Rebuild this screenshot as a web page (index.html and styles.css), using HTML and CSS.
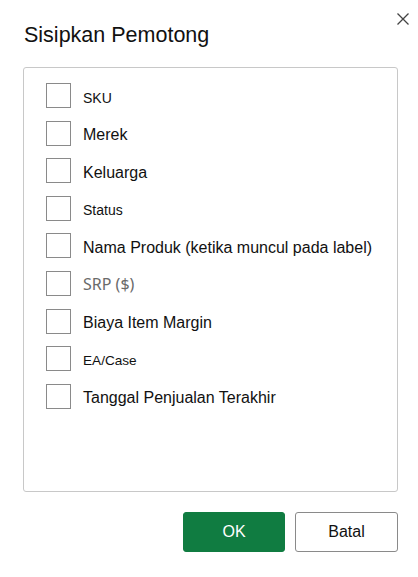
FILE: index.html
```html
<!DOCTYPE html>
<html lang="id">
<head>
<meta charset="utf-8">
<title>Sisipkan Pemotong</title>
<link rel="stylesheet" href="styles.css">
</head>
<body>
<div class="dialog">
  <div class="header">
    <h1 class="title">Sisipkan Pemotong</h1>
    <button class="close" aria-label="Tutup">
      <svg width="12" height="12" viewBox="0 0 12 12"><path d="M0.5 0.5 L11.5 11.5 M11.5 0.5 L0.5 11.5" stroke="#444" stroke-width="1.3" fill="none"/></svg>
    </button>
  </div>
  <div class="listbox">
    <label class="row"><span class="check"></span><span class="lbl sm">SKU</span></label>
    <label class="row"><span class="check"></span><span class="lbl">Merek</span></label>
    <label class="row"><span class="check"></span><span class="lbl">Keluarga</span></label>
    <label class="row"><span class="check"></span><span class="lbl sm">Status</span></label>
    <label class="row"><span class="check"></span><span class="lbl">Nama Produk (ketika muncul pada label)</span></label>
    <label class="row"><span class="check"></span><span class="lbl alt">SRP ($)</span></label>
    <label class="row"><span class="check"></span><span class="lbl">Biaya Item Margin</span></label>
    <label class="row"><span class="check"></span><span class="lbl xs">EA/Case</span></label>
    <label class="row"><span class="check"></span><span class="lbl">Tanggal Penjualan Terakhir</span></label>
  </div>
  <div class="actions">
    <button class="btn primary">OK</button>
    <button class="btn secondary">Batal</button>
  </div>
</div>
</body>
</html>
```

FILE: styles.css
```css
html, body {
  margin: 0;
  padding: 0;
  background: #ffffff;
}
body {
  font-family: "Liberation Sans", Arial, sans-serif;
  color: #1b1b1b;
}
.dialog {
  width: 418px;
  height: 577px;
  box-sizing: border-box;
  padding: 0 20px 0 23px;
  display: flex;
  flex-direction: column;
}
.header {
  display: flex;
  justify-content: space-between;
  align-items: flex-start;
}
.title {
  margin: 21px 0 0 1px;
  font-size: 21.5px;
  font-weight: normal;
  line-height: 28px;
  color: #111;
}
.close {
  margin: 13px -11px 0 0;
  padding: 0;
  width: 12px;
  height: 12px;
  border: none;
  background: transparent;
  display: flex;
}
.listbox {
  margin-top: 18px;
  height: 425px;
  box-sizing: border-box;
  border: 1px solid #c8c8c8;
  border-radius: 3px;
  padding: 15px 0 0 22px;
  display: flex;
  flex-direction: column;
  gap: 12.6px;
}
.row {
  display: flex;
  align-items: center;
  height: 25px;
  gap: 12px;
}
.check {
  width: 25px;
  height: 25px;
  box-sizing: border-box;
  border: 1px solid #8a8a8a;
  background: #fff;
  flex: none;
}
.lbl {
  font-size: 16px;
  color: #111;
  margin-top: 4px;
}
.lbl.sm {
  font-size: 14px;
}
.lbl.xs {
  font-size: 13.6px;
}
.lbl.alt {
  font-family: "Noto Sans", sans-serif;
  font-size: 16px;
  color: #6a6a6a;
  margin-top: 2px;
}
.actions {
  margin-top: 20px;
  display: flex;
  justify-content: flex-end;
  gap: 10px;
}
.btn {
  height: 40px;
  box-sizing: border-box;
  font-family: "Liberation Sans", Arial, sans-serif;
  font-size: 16px;
  border-radius: 3px;
  padding: 0;
}
.primary {
  width: 102px;
  background: #107c41;
  color: #ffffff;
  border: 1px solid #107c41;
}
.secondary {
  width: 103px;
  background: #ffffff;
  color: #111;
  border: 1px solid #8a8a8a;
}
```
